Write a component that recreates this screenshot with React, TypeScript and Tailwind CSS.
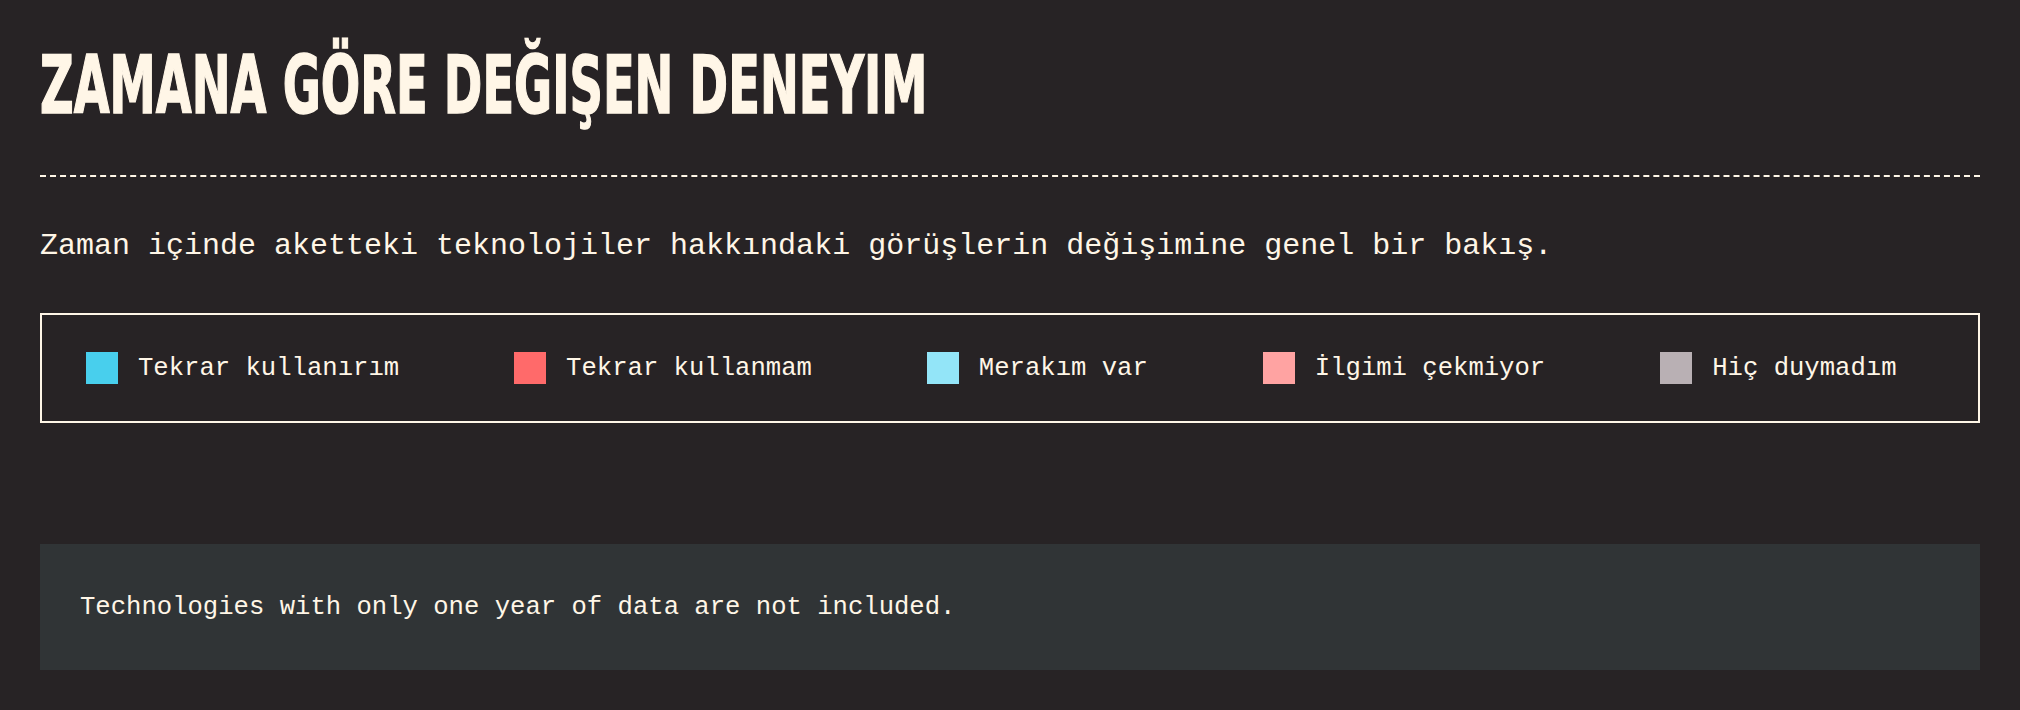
import React from "react";

const items = [
  { label: "Tekrar kullanırım", color: "bg-[#48cfed]" },
  { label: "Tekrar kullanmam", color: "bg-[#ff6a6a]" },
  { label: "Merakım var", color: "bg-[#93e5f8]" },
  { label: "İlgimi çekmiyor", color: "bg-[#ffa3a2]" },
  { label: "Hiç duymadım", color: "bg-[#b9b0b4]" },
];

export default function App() {
  return (
    <div className="min-h-[710px] w-full bg-[#272325] px-[40px] pt-[46px] pb-[40px] text-[#fff6e7] [font-family:'Liberation_Mono','DejaVu_Sans_Mono',monospace]">
      <h1 className="h-[80px] origin-left scale-x-[0.645] whitespace-nowrap text-[80px] font-bold leading-none [font-family:'DejaVu_Sans_Condensed','Liberation_Sans',sans-serif] [-webkit-text-stroke:1.5px_#fff6e7]">
        ZAMANA GÖRE DEĞIŞEN DENEYIM
      </h1>
      <div className="mt-[49px] border-t-2 border-dashed border-[#fff6e7]" />
      <p className="mt-[54px] text-[30px] leading-[30px]">
        Zaman içinde aketteki teknolojiler hakkındaki görüşlerin değişimine genel bir bakış.
      </p>
      <div className="mt-[52px] flex h-[110px] items-center gap-[115px] border-2 border-[#fff6e7] pl-[44px]">
        {items.map((it) => (
          <div key={it.label} className="flex items-center gap-[20px]">
            <span className={`block h-[32px] w-[32px] ${it.color}`} />
            <span className="pt-[2px] text-[25.6px] leading-[32px] whitespace-nowrap">{it.label}</span>
          </div>
        ))}
      </div>
      <div className="mt-[121px] flex h-[126px] items-center bg-[#303436] px-[40px]">
        <p className="pt-[2px] text-[25.6px] leading-[32px]">
          Technologies with only one year of data are not included.
        </p>
      </div>
    </div>
  );
}
